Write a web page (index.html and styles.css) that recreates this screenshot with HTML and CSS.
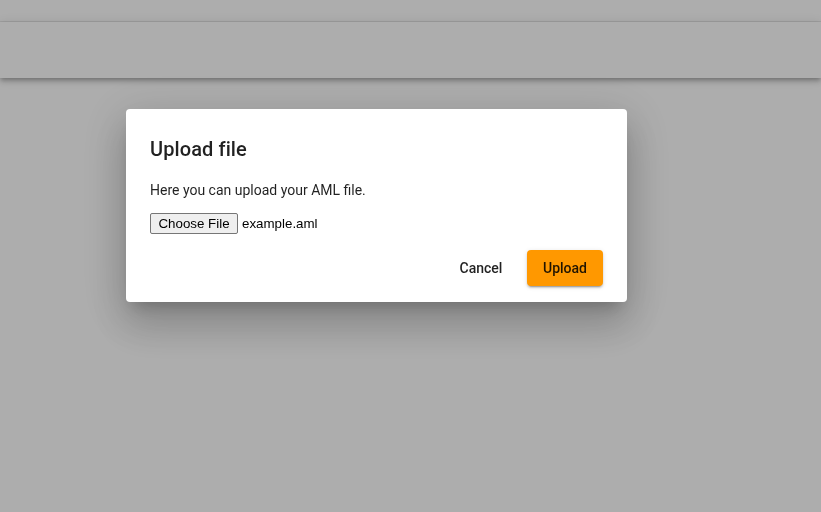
FILE: index.html
```html
<!DOCTYPE html>
<html>
<head>
<meta charset="utf-8">
<link rel="stylesheet" href="styles.css">
</head>
<body>
<div class="page">
  <div class="topstrip"></div>
  <header class="appbar"></header>
  <main class="content"></main>
</div>
<div class="overlay">
  <div class="dialog">
    <h2 class="dialog-title">Upload file</h2>
    <p class="dialog-text">Here you can upload your AML file.</p>
    <div class="file-row">
      <button class="file-btn" type="button">Choose File</button>
      <span class="file-name">example.aml</span>
    </div>
    <div class="actions">
      <button class="btn btn-flat" type="button">Cancel</button>
      <button class="btn btn-raised" type="button">Upload</button>
    </div>
  </div>
</div>
</body>
</html>
```
FILE: styles.css
```css
html, body {
  margin: 0;
  padding: 0;
  height: 100%;
  background: #ffffff;
  font-family: Roboto, "Helvetica Neue", sans-serif;
}
.page {
  display: flex;
  flex-direction: column;
  height: 100%;
}
.topstrip {
  height: 21px;
  border-bottom: 1px solid #ebebeb;
  background: #ffffff;
}
.appbar {
  height: 56px;
  background: #ffffff;
  box-shadow: 0 2px 4px -1px rgba(0,0,0,.2), 0 4px 5px 0 rgba(0,0,0,.14), 0 1px 10px 0 rgba(0,0,0,.12);
  position: relative;
  z-index: 1;
}
.content {
  flex: 1;
}
.overlay {
  position: fixed;
  inset: 0;
  z-index: 100;
  background: rgba(0,0,0,0.32);
}
.dialog {
  position: absolute;
  left: 126px;
  top: 109px;
  width: 501px;
  box-sizing: border-box;
  padding: 24px 24px 16px;
  background: #ffffff;
  border-radius: 4px;
  box-shadow: 0 11px 15px -7px rgba(0,0,0,.2), 0 24px 38px 3px rgba(0,0,0,.14), 0 9px 46px 8px rgba(0,0,0,.12);
  color: rgba(0,0,0,.87);
}
.dialog-title {
  margin: 0 0 15px;
  font-size: 20px;
  font-weight: 500;
  line-height: 32px;
  letter-spacing: .005em;
}
.dialog-text {
  margin: 0 0 13px;
  font-size: 14px;
  line-height: 20px;
}
.file-row {
  display: flex;
  align-items: center;
  height: 21px;
  font-family: "Liberation Sans", Arial, sans-serif;
  font-size: 13.33px;
}
.file-btn {
  height: 21px;
  box-sizing: border-box;
  padding: 1px 6px;
  border: 1px solid #767676;
  border-radius: 2px;
  background: #efefef;
  color: #000;
  font-family: "Liberation Sans", Arial, sans-serif;
  font-size: 13.33px;
  width: 88px;
  margin: 0 4px 0 0;
}
.file-name {
  color: #000;
}
.actions {
  display: flex;
  justify-content: flex-end;
  gap: 8px;
  margin-top: 16px;
}
.btn {
  height: 36px;
  min-width: 64px;
  padding: 0 16px;
  border: none;
  border-radius: 4px;
  font-family: Roboto, "Helvetica Neue", sans-serif;
  font-size: 14px;
  font-weight: 500;
  line-height: 35px;
  color: rgba(0,0,0,.87);
  background: transparent;
  width: 76px;
}
.btn-raised {
  background: #ff9800;
  box-shadow: 0 3px 1px -2px rgba(0,0,0,.2), 0 2px 2px 0 rgba(0,0,0,.14), 0 1px 5px 0 rgba(0,0,0,.12);
}
```
